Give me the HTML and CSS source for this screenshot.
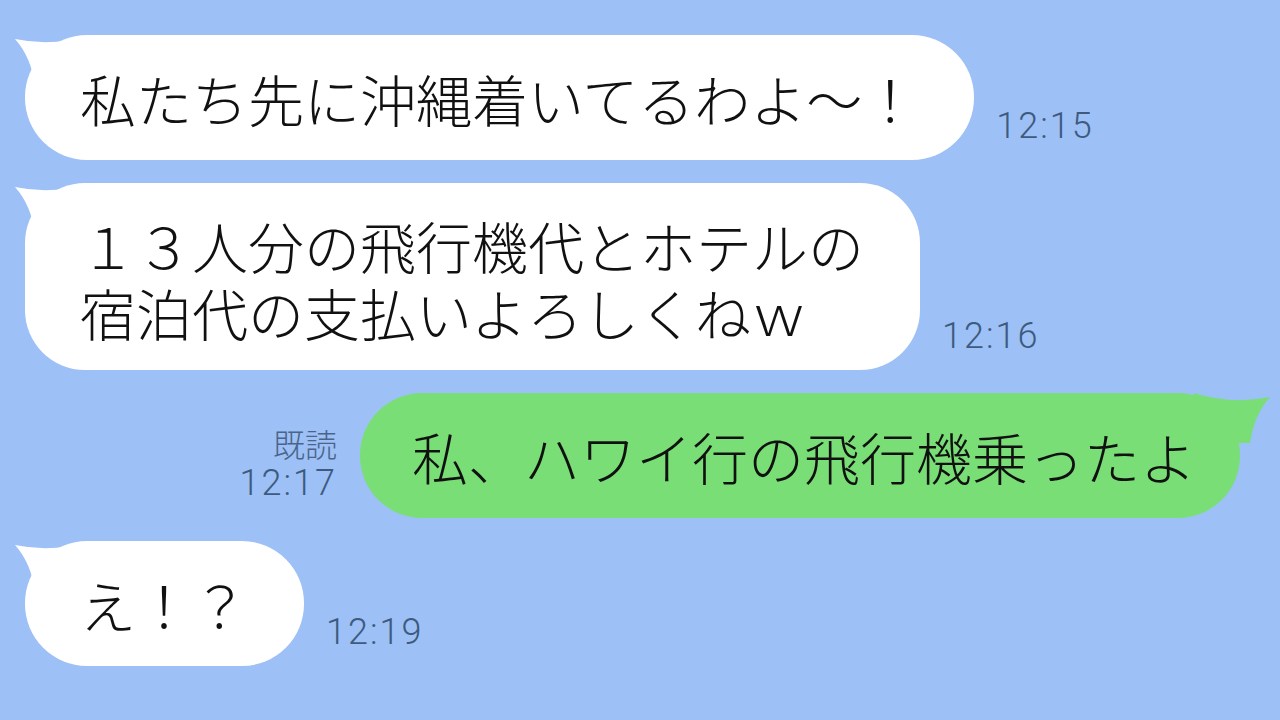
FILE: index.html
```html
<!DOCTYPE html>
<html>
<head>
	<meta charset="utf-8">
	<title>トーク</title>
	<link rel="stylesheet" href="styles.css">
</head>
<body>
	<div class="chat">
		<div class="row">
			<div class="bubble in">
				<svg class="tail" viewBox="0 0 80 50"><path d="M2,4 Q40,12 78,0 L78,50 L22,50 Q18,22 2,4 Z"/></svg>
				<p class="texto">私たち先に沖縄着いてるわよ～！</p>
			</div>
			<div class="meta"><span class="hora">12:15</span></div>
		</div>

		<div class="row">
			<div class="bubble in multi">
				<svg class="tail" viewBox="0 0 80 50"><path d="M2,4 Q40,12 78,0 L78,50 L22,50 Q18,22 2,4 Z"/></svg>
				<p class="texto">１３人分の飛行機代とホテルの<br>宿泊代の支払いよろしくねｗ</p>
			</div>
			<div class="meta"><span class="hora">12:16</span></div>
		</div>

		<div class="row out">
			<div class="meta right">
				<span class="lido">既読</span>
				<span class="hora">12:17</span>
			</div>
			<div class="bubble me">
				<svg class="tail" viewBox="0 0 80 50"><path d="M78,4 Q40,12 2,0 L2,50 L58,50 Q62,22 78,4 Z"/></svg>
				<p class="texto">私、ハワイ行の飛行機乗ったよ</p>
			</div>
		</div>

		<div class="row">
			<div class="bubble in">
				<svg class="tail" viewBox="0 0 80 50"><path d="M2,4 Q40,12 78,0 L78,50 L22,50 Q18,22 2,4 Z"/></svg>
				<p class="texto">え！？</p>
			</div>
			<div class="meta"><span class="hora">12:19</span></div>
		</div>
	</div>
</body>
</html>
```

FILE: styles.css
```css
html, body {
	margin: 0;
	height: 100%;
}

body {
	background-color: #9dc0f6;
	font-family: "Noto Sans CJK JP", "Noto Sans", sans-serif;
	color: #111;
	overflow: hidden;
}

.chat {
	display: flex;
	flex-direction: column;
	gap: 23px;
	padding: 35px 40px 0 25px;
}

.row {
	display: flex;
	align-items: flex-end;
	gap: 22px;
}

.row.out {
	justify-content: flex-end;
	gap: 23px;
}

.bubble {
	position: relative;
	background-color: #fff;
	border-radius: 62px;
	height: 125px;
	box-sizing: border-box;
	padding: 0 56px 0 55px;
	display: flex;
	align-items: center;
}

.bubble.multi {
	height: 187px;
	border-radius: 60px;
}

.bubble.multi .texto {
	line-height: 67px;
	padding-top: 3px;
}

.bubble.me {
	background-color: #7ade76;
	padding: 0 44px 0 52px;
}

.texto {
	margin: 0;
	font-size: 56px;
	line-height: 70px;
	font-weight: 300;
	white-space: nowrap;
}

.tail {
	position: absolute;
	top: 0;
	left: -12px;
	width: 80px;
	height: 50px;
	fill: #fff;
}

.bubble.me .tail {
	left: auto;
	right: -32px;
	fill: #7ade76;
}

.meta {
	display: flex;
	flex-direction: column;
	color: #3d5a7f;
	margin-bottom: 13px;
}

.meta.right {
	align-items: flex-end;
	margin-bottom: 14px;
}

.hora {
	font-family: Roboto, "Noto Sans", sans-serif;
	font-size: 36px;
	font-weight: 300;
	letter-spacing: 2px;
	line-height: 42px;
}

.lido {
	font-size: 32px;
	line-height: 38px;
	font-weight: 300;
	color: #4a6589;
}
```
